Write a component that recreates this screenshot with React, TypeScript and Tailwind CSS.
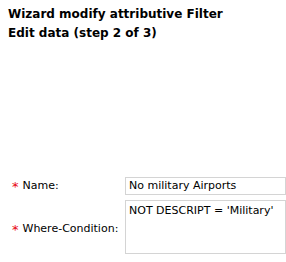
export default function App() {
  return (
    <div className="w-[286px] h-[262px] bg-white text-black font-['DejaVu_Sans',Verdana,sans-serif] overflow-hidden">
      <div className="pl-2 pt-[5px] text-[12px] font-bold leading-[19px]">
        <div>Wizard modify attributive Filter</div>
        <div>Edit data (step 2 of 3)</div>
      </div>
      <div className="mt-[134px] flex flex-col gap-[5px] text-[11px]">
        <div className="flex items-center">
          <div className="w-[125px] pl-[12px] pt-[1px] flex items-center gap-[4px]">
            <span className="text-red-600 text-[13px] leading-none">*</span>
            <span>Name:</span>
          </div>
          <div className="flex-1 h-[18px] border border-[#d4d4d4] px-[3px] flex items-center">No military Airports</div>
        </div>
        <div className="flex items-center">
          <div className="w-[125px] pl-[12px] pt-[4px] flex items-center gap-[4px]">
            <span className="text-red-600 text-[13px] leading-none">*</span>
            <span>Where-Condition:</span>
          </div>
          <div className="flex-1 h-[54px] border border-[#d4d4d4] px-[3px] pt-[2px]">NOT DESCRIPT = 'Military'</div>
        </div>
      </div>
    </div>
  );
}
